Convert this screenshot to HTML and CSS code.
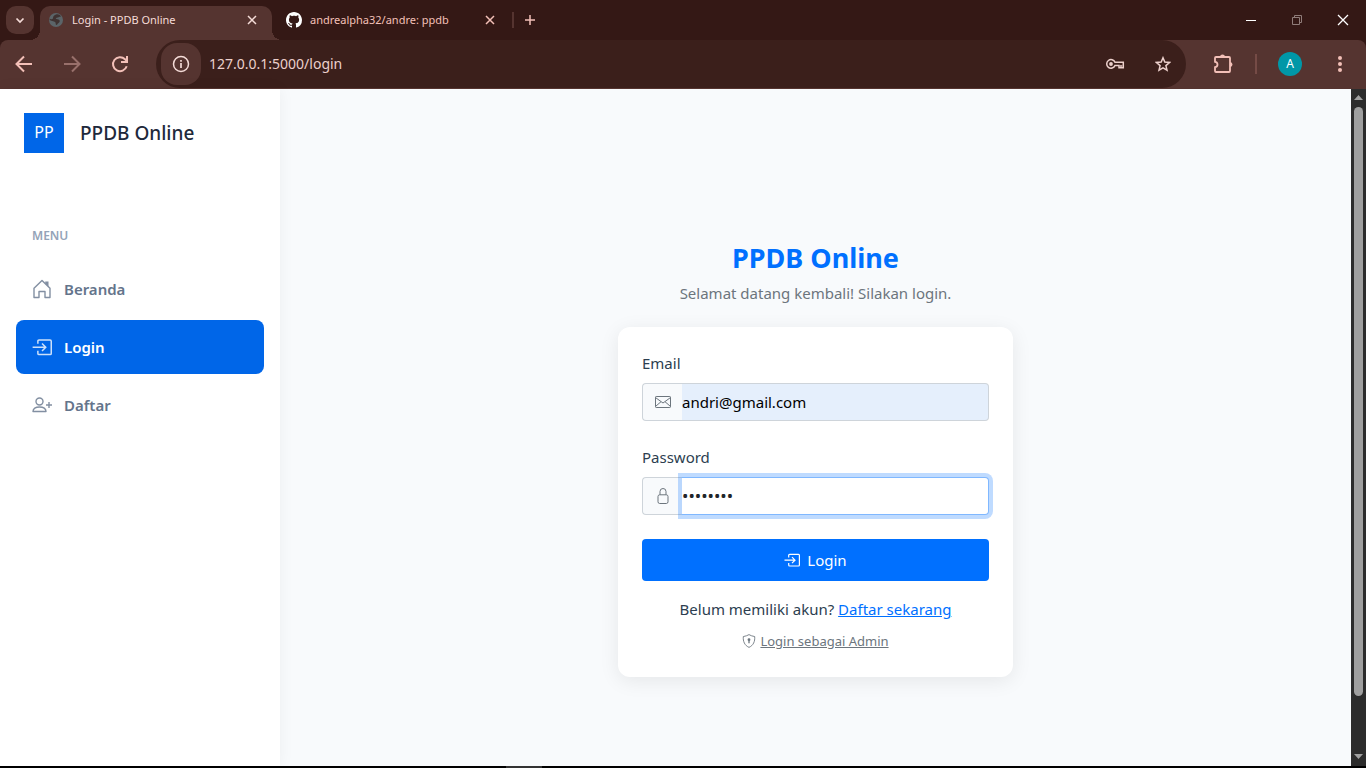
FILE: index.html
```html
<!DOCTYPE html>
<html lang="id">
<head>
<meta charset="utf-8">
<title>Login - PPDB Online</title>
<link rel="stylesheet" href="styles.css">
</head>
<body>
<svg class="defs" aria-hidden="true">
  <symbol id="i-close" viewBox="0 0 10 10"><path d="M1 1l8 8M9 1L1 9" fill="none" stroke="currentColor" stroke-width="1.5"/></symbol>
  <symbol id="i-enter" viewBox="0 0 16 16"><path fill="none" stroke="currentColor" stroke-width="1.200" d="M4.700 5.400V3.300q0-.9.9-.9h8.900q.9 0 .9.900v9.800q0 .9-.9.900H5.600q-.9 0-.9-.9V11M.5 8.200h10.300M8 5.200l3 3-3 3"/></symbol>
</svg>

<header class="browser">
  <div class="tabstrip">
    <button class="tab-search" aria-label="Cari tab"><svg width="10" height="10" viewBox="0 0 10 10"><path d="M1.500 3.500L5 7l3.500-3.500" fill="none" stroke="currentColor" stroke-width="1.700"/></svg></button>
    <div class="tab tab-active">
      <svg width="16" height="16" viewBox="0 0 16 16"><circle cx="8" cy="8" r="7" fill="#5b6468"/><path d="M8 2.500c2-.8 4 .2 5 1.700-1 .8-1.700.5-2.500 1-1 .6-2.500.3-2.800 1.300.5 1 2.800.7 3.600 1.600.9 1.200.3 2.300-.7 2.900-1.200.5-1 1.800-2.300 2-.9-.4-.4-1.700-.8-2.500C6.800 9.300 4 9.500 1.500 8l.4-1.300c1.500.8 2.500.6 3-.3.500-1.200-.1-2.500 3.100-3.900z" fill="#3f3231"/></svg>
      <span class="tab-title">Login - PPDB Online</span>
      <button class="tab-close" aria-label="Tutup tab"><svg width="10" height="10"><use href="#i-close"/></svg></button>
    </div>
    <div class="tab">
      <svg width="16" height="16" viewBox="0 0 16 16" fill="#fff"><path d="M8 0C3.580 0 0 3.580 0 8c0 3.540 2.290 6.530 5.470 7.590.4.070.55-.17.55-.38 0-.19-.01-.82-.01-1.490-2.010.37-2.530-.49-2.690-.94-.09-.23-.48-.94-.82-1.130-.28-.15-.68-.52-.01-.53.63-.01 1.080.58 1.230.82.72 1.210 1.870.87 2.330.66.07-.52.28-.87.51-1.070-1.780-.2-3.640-.89-3.640-3.950 0-.87.31-1.590.82-2.150-.08-.2-.36-1.020.08-2.120 0 0 .67-.21 2.200.82.64-.18 1.320-.27 2-.27s1.360.09 2 .27c1.530-1.040 2.200-.82 2.200-.82.44 1.100.16 1.920.08 2.120.51.56.82 1.270.82 2.150 0 3.070-1.870 3.750-3.650 3.950.29.25.54.73.54 1.480 0 1.070-.01 1.930-.01 2.200 0 .21.15.46.55.38A8.010 8.010 0 0 0 16 8c0-4.420-3.580-8-8-8z"/></svg>
      <span class="tab-title">andrealpha32/andre: ppdb</span>
      <button class="tab-close" aria-label="Tutup tab"><svg width="10" height="10"><use href="#i-close"/></svg></button>
    </div>
    <div class="tab-divider"></div>
    <button class="new-tab" aria-label="Tab baru"><svg width="12" height="12" viewBox="0 0 12 12"><path d="M6 1v10M1 6h10" stroke="currentColor" stroke-width="1.500"/></svg></button>
    <div class="window-buttons">
      <button aria-label="Kecilkan"><svg width="12" height="12" viewBox="0 0 12 12"><path d="M1 6.500h10" stroke="currentColor"/></svg></button>
      <button class="dim" aria-label="Pulihkan"><svg width="12" height="12" viewBox="0 0 12 12"><path d="M1.500 3.500h7v7h-7zM3.500 3.500v-2h7v7h-2" fill="none" stroke="currentColor"/></svg></button>
      <button aria-label="Tutup"><svg width="12" height="12" viewBox="0 0 12 12"><path d="M1 1l10 10M11 1L1 11" stroke="currentColor" stroke-width="1.300"/></svg></button>
    </div>
  </div>
  <div class="toolbar">
    <div class="nav-buttons">
      <button aria-label="Kembali"><svg width="18" height="18" viewBox="0 0 18 18"><path d="M17 9H2M9 1.500L1.500 9 9 16.500" fill="none" stroke="currentColor" stroke-width="2"/></svg></button>
      <button class="disabled" aria-label="Maju"><svg width="18" height="18" viewBox="0 0 18 18"><path d="M1 9h15M9 1.500L16.500 9 9 16.500" fill="none" stroke="currentColor" stroke-width="2"/></svg></button>
      <button aria-label="Muat ulang"><svg width="18" height="18" viewBox="0 0 18 18"><path d="M15.700 11.300A7 7 0 1 1 14 4.200l2 2" fill="none" stroke="currentColor" stroke-width="2"/><path d="M17 1v7h-7V6h5V1z" fill="currentColor"/></svg></button>
    </div>
    <div class="omnibox">
      <button class="site-info" aria-label="Informasi situs"><svg width="18" height="18" viewBox="0 0 18 18"><circle cx="9" cy="9" r="7.500" fill="none" stroke="currentColor" stroke-width="1.500"/><path d="M9 8v5M9 5v1.700" stroke="currentColor" stroke-width="1.700"/></svg></button>
      <input class="address" type="text" aria-label="Alamat" value="127.0.0.1:5000/login">
      <button class="omni-action" aria-label="Sandi"><svg width="20" height="18" viewBox="0 0 20 18" fill="none" stroke="currentColor"><path stroke-width="1.500" d="M10 7.300h8.300v5.400h-4.300v-2.200h-4a4.300 4.300 0 1 1 0-3.200z"/><circle cx="6" cy="9" r="1.900" fill="currentColor" stroke="none"/><path d="M14.800 11h2.500" stroke-width="1.500"/></svg></button>
      <button class="omni-action" aria-label="Bookmark"><svg width="16" height="16" viewBox="0 0 16 16"><path d="M8 1.800l1.800 4.300 4.700.4-3.600 3.100 1.100 4.600L8 11.800l-4 2.400 1.100-4.600L1.500 6.500l4.700-.4z" fill="none" stroke="currentColor" stroke-width="1.500"/></svg></button>
    </div>
    <button class="ext" aria-label="Ekstensi"><svg width="22" height="22" viewBox="0 0 22 22"><path d="M4 4h13q1 0 1 1v13q0 1-1 1H4q-1 0-1-1v-3.800q2.500-.3 2.500-2.700T3 8.800V5q0-1 1-1z" fill="none" stroke="currentColor" stroke-width="1.800"/><path d="M8 4a2.500 2.500 0 0 1 5 0zM18 9a2.500 2.500 0 0 1 0 5z" fill="currentColor"/></svg></button>
    <div class="toolbar-divider"></div>
    <button class="avatar" aria-label="Profil">A</button>
    <button class="kebab" aria-label="Menu"><svg width="6" height="18" viewBox="0 0 6 18" fill="currentColor"><circle cx="3" cy="3" r="2"/><circle cx="3" cy="9" r="2"/><circle cx="3" cy="15" r="2"/></svg></button>
  </div>
</header>

<div class="viewport">
  <aside class="sidebar">
    <div class="brand"><span class="brand-logo">PP</span><span class="brand-name">PPDB Online</span></div>
    <h2 class="menu-title">MENU</h2>
    <nav class="menu">
      <a href="#beranda"><svg width="20" height="20" viewBox="0 0 20 20"><path d="M2 18.500V9.200l8-7.700 8 7.700v9.300h-5v-6H7v6z" fill="none" stroke="currentColor" stroke-width="1.400" stroke-linejoin="round"/><path d="M13.200 2.500h3.300v5.200l-3.300-3.200z" fill="currentColor"/></svg>Beranda</a>
      <a class="active" href="#login"><svg width="20" height="20"><use href="#i-enter"/></svg>Login</a>
      <a href="#daftar"><svg width="20" height="20" viewBox="0 0 20 20"><g fill="none" stroke="currentColor" stroke-width="1.400"><circle cx="7.500" cy="6.500" r="3.500"/><path d="M1 16.500c0-3 2.500-4.500 6.500-4.500s6.500 1.500 6.500 4.500zM17 7v6M14 10h6" stroke-linejoin="round"/></g></svg>Daftar</a>
    </nav>
  </aside>

  <main class="content">
    <section class="login">
      <h1>PPDB Online</h1>
      <p class="subtitle">Selamat datang kembali! Silakan login.</p>
      <form class="card">
        <label for="email">Email</label>
        <div class="field">
          <span class="field-icon"><svg width="16" height="16" viewBox="0 0 16 16"><path d="M1.200 2.500h13.600q.7 0 .7.700v9.600q0 .7-.7.700H1.200q-.7 0-.7-.7V3.200q0-.7.7-.7zM.7 3.700L8 9l7.300-5.300M.7 12.300L6 7.700M15.300 12.300L10 7.700" fill="none" stroke="currentColor"/></svg></span>
          <input class="autofilled" id="email" type="email" value="andri@gmail.com">
        </div>
        <label for="password">Password</label>
        <div class="field">
          <span class="field-icon"><svg width="16" height="16" viewBox="0 0 16 16"><path d="M5 6.800V3.500a3 3 0 0 1 6 0v3.300M4.700 6.800h6.600q1.700 0 1.700 1.700v5.300q0 1.700-1.700 1.700H4.700Q3 15.500 3 13.800V8.500q0-1.700 1.700-1.700z" fill="none" stroke="currentColor"/></svg></span>
          <input class="focused" id="password" type="password" value="12345678">
        </div>
        <button class="submit" type="submit"><svg width="16" height="16"><use href="#i-enter"/></svg>Login</button>
        <p class="register">Belum memiliki akun? <a href="#daftar">Daftar sekarang</a></p>
        <p class="admin"><svg width="14" height="14" viewBox="0 0 16 16"><path d="M8 .7C6 1.900 4 2.500 1.500 2.900 1 8.500 3 13 8 15.300c5-2.300 7-6.800 6.500-12.400C12 2.500 10 1.900 8 .7z" fill="none" stroke="currentColor"/><circle cx="8" cy="6.500" r="1.600" fill="currentColor"/><path d="M8 7v3.500" stroke="currentColor" stroke-width="1.500"/></svg><a href="#admin">Login sebagai Admin</a></p>
      </form>
    </section>
  </main>

  <div class="scrollbar" aria-hidden="true">
    <svg width="9" height="5" viewBox="0 0 9 5"><path d="M0 5h9L4.500 0z" fill="#a0a0a0"/></svg>
    <div class="track"><div class="thumb"></div></div>
    <svg width="9" height="5" viewBox="0 0 9 5"><path d="M0 0h9L4.500 5z" fill="#a0a0a0"/></svg>
  </div>
</div>
<div class="taskbar"><div class="taskbar-item"></div></div>
</body>
</html>
```
FILE: styles.css
```css
* { box-sizing: border-box; }
body {
  margin: 0;
  height: 100vh;
  display: flex;
  flex-direction: column;
  overflow: hidden;
  font: 15px/24px "Segoe UI", "Noto Sans", sans-serif;
  color: #2c3e50;
}
button, input { font: inherit; color: inherit; border: 0; padding: 0; background: none; }
button { display: flex; align-items: center; justify-content: center; cursor: pointer; }
svg { display: block; flex: none; }
.defs { position: absolute; width: 0; height: 0; }

/* Browser chrome */
.browser { background: #341815; color: #f3c0b8; flex: none; }
.tabstrip { display: flex; align-items: center; height: 40px; padding-left: 6px; font-size: 11px; }
.tab-search { width: 28px; height: 28px; margin-right: 6px; border-radius: 10px; background: #553430; color: #f5dcd8; }
.tab { position: relative; display: flex; align-items: center; gap: 8px; width: 237px; height: 34px; margin-top: 6px; padding: 0 14px 6px; }
.tab-active { width: 232px; padding: 0 15px 6px 8px; border-radius: 10px 10px 0 0; background: #553430; color: #f5dcd8; }
.tab-active::before, .tab-active::after { content: ""; position: absolute; bottom: 0; width: 10px; height: 10px; }
.tab-active::before { left: -10px; background: radial-gradient(circle at 0 0, transparent 10px, #553430 10px); }
.tab-active::after { right: -10px; background: radial-gradient(circle at 100% 0, transparent 10px, #553430 10px); }
.tab-title { flex: 1; white-space: nowrap; }
.tab-divider { width: 2px; height: 16px; margin-left: 3px; background: #553430; }
.new-tab { width: 32px; height: 28px; }
.window-buttons { display: flex; margin-left: auto; color: #fff; }
.window-buttons button { width: 46px; height: 40px; }
.window-buttons .dim { color: #8f7c79; }
.toolbar { display: flex; align-items: center; height: 49px; padding-bottom: 1px; border-radius: 8px 8px 0 0; background: #553430; }
.nav-buttons { display: flex; width: 156px; }
.nav-buttons button { width: 48px; height: 40px; }
.nav-buttons .disabled { color: #98706b; }
.omnibox { display: flex; align-items: center; flex: 1; height: 48px; padding: 0 7px 0 5px; border-radius: 24px; background: #3b1f1b; color: #ecd0cc; }
.site-info { width: 40px; height: 42px; border-radius: 16px; background: #553430; color: #f5dcd8; }
.address { flex: 1; min-width: 0; padding-left: 8px; font-size: 14px; outline: 0; }
.omni-action { width: 32px; height: 32px; margin-left: 16px; }
.ext { width: 36px; height: 36px; margin-left: 19px; }
.toolbar-divider { width: 2px; height: 20px; margin: 0 21px 0 14px; background: #754b46; }
.avatar { width: 24px; height: 24px; border-radius: 50%; background: #0097a7; color: #fff; font-size: 12px; }
.kebab { width: 32px; height: 32px; margin: 0 10px 0 22px; }

/* Page */
.viewport { display: flex; flex: 1; min-height: 0; background: #f8fafc; }
.sidebar { width: 280px; flex: none; background: #fff; box-shadow: 0 0 15px rgba(0, 0, 0, .05); }
.brand { display: flex; align-items: center; gap: 16px; padding: 24px; }
.brand-logo { width: 40px; height: 40px; background: #0066e8; color: #fff; font-size: 16px; line-height: 38px; text-align: center; }
.brand-name { color: #1e293b; font-size: 19px; font-weight: 500; }
.menu-title { margin: 49px 0 0; padding-left: 32px; color: #94a3b8; font-size: 12px; font-weight: 600; line-height: 20px; }
.menu { display: grid; gap: 4px; padding: 16px; }
.menu a { display: flex; align-items: center; gap: 12px; height: 54px; padding: 0 16px; border-radius: 8px; color: #64748b; font-weight: 600; text-decoration: none; }
.menu svg { opacity: .8; }
.menu .active { background: #0066e8; color: #fff; }
.content { flex: 1; min-width: 0; padding-top: 152px; }
.login { width: 395px; max-width: 100%; margin: 0 auto; }
h1 { margin: 0 0 6px; color: #0070ff; font-size: 27px; font-weight: 700; line-height: 34px; text-align: center; }
.subtitle { margin: 0 0 22px; color: #6c757d; text-align: center; }
.card { padding: 24px; border-radius: 12px; background: #fff; box-shadow: 0 4px 20px rgba(0, 0, 0, .08); }
.card label { display: block; margin-bottom: 8px; }
.field { display: flex; height: 38px; margin-bottom: 24px; }
.field-icon { display: flex; align-items: center; width: 40px; padding-left: 12px; border: 1px solid #ced4da; border-right: 0; border-radius: 4px 0 0 4px; background: #f8fafc; color: #6c757d; }
.field input { flex: 1; min-width: 0; border: 1px solid #ced4da; border-left: 0; border-radius: 0 4px 4px 0; background: #fff; color: #212529; outline: 0; }
.field .autofilled { background: #e5effc; color: #000; }
.field .focused { border-color: #80b8ff; box-shadow: 0 0 0 4px rgba(0, 112, 255, .25); font-size: 17px; }
.submit { width: 100%; height: 42px; gap: 7px; border-radius: 4px; background: #0070ff; color: #fff; }
.register { margin: 16px 0 8px; text-align: center; }
.register a { color: #0070ff; }
.admin { display: flex; align-items: center; justify-content: center; gap: 4px; margin: 0; color: #6c757d; font-size: 13px; }
.admin a { color: inherit; }
.scrollbar { display: flex; flex-direction: column; align-items: center; width: 15px; padding: 6px 0 7px; background: #2c2c2c; }
.track { flex: 1; padding: 7px 0; }
.thumb { width: 9px; height: 92%; border-radius: 5px; background: #9f9f9f; }
.taskbar { flex: none; height: 2px; background: #000; }
.taskbar-item { width: 36px; height: 2px; margin-left: 506px; background: #333; }
```
